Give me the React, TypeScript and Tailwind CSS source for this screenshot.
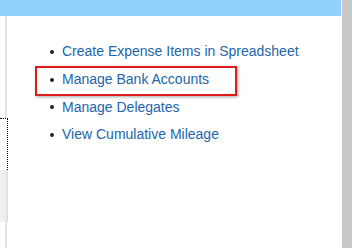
import React from "react";

const items = [
  "Create Expense Items in Spreadsheet",
  "Manage Bank Accounts",
  "Manage Delegates",
  "View Cumulative Mileage",
];

export default function App() {
  return (
    <div
      className="relative flex w-[352px] h-[248px] overflow-hidden bg-white"
      style={{ fontFamily: '"Liberation Sans", Arial, sans-serif' }}
    >
      <div className="flex flex-col w-[341px]">
        <div className="h-[16px] bg-[#90d0fb]" />
        <div className="flex flex-1">
          {/* left sidebar fragment */}
          <div className="flex flex-col w-[8px]">
            <div className="h-[102px] flex">
              <div className="w-[5px]" />
              <div className="w-[2px] bg-[#e3e3e3]" />
            </div>
            <div className="h-[52px] border-t border-r border-dotted border-black" />
            <div className="h-[52px] bg-[#efefef] border-r-2 border-[#e0e0e0]" />
            <div className="flex-1 flex">
              <div className="w-[5px]" />
              <div className="w-[2px] bg-[#e3e3e3]" />
            </div>
          </div>
          {/* main content */}
          <ul className="pt-[22px] pl-[42px] text-[14px] text-[#2166aa]">
            {items.map((t) => (
              <li key={t} className="flex items-center h-[27.7px]">
                <span className="w-[4px] h-[4px] rounded-full bg-[#222] mr-[8px]" />
                <span>{t}</span>
              </li>
            ))}
          </ul>
        </div>
      </div>
      <div className="w-[1px] bg-white" />
      <div className="w-[10px] bg-[#c9c9c9]" />
      {/* red highlight annotation */}
      <div className="absolute left-[35px] top-[66px] w-[202px] h-[30px] border-2 border-[#e01b1b] shadow-[1px_1px_3px_rgba(0,0,0,0.35)]" />
    </div>
  );
}
